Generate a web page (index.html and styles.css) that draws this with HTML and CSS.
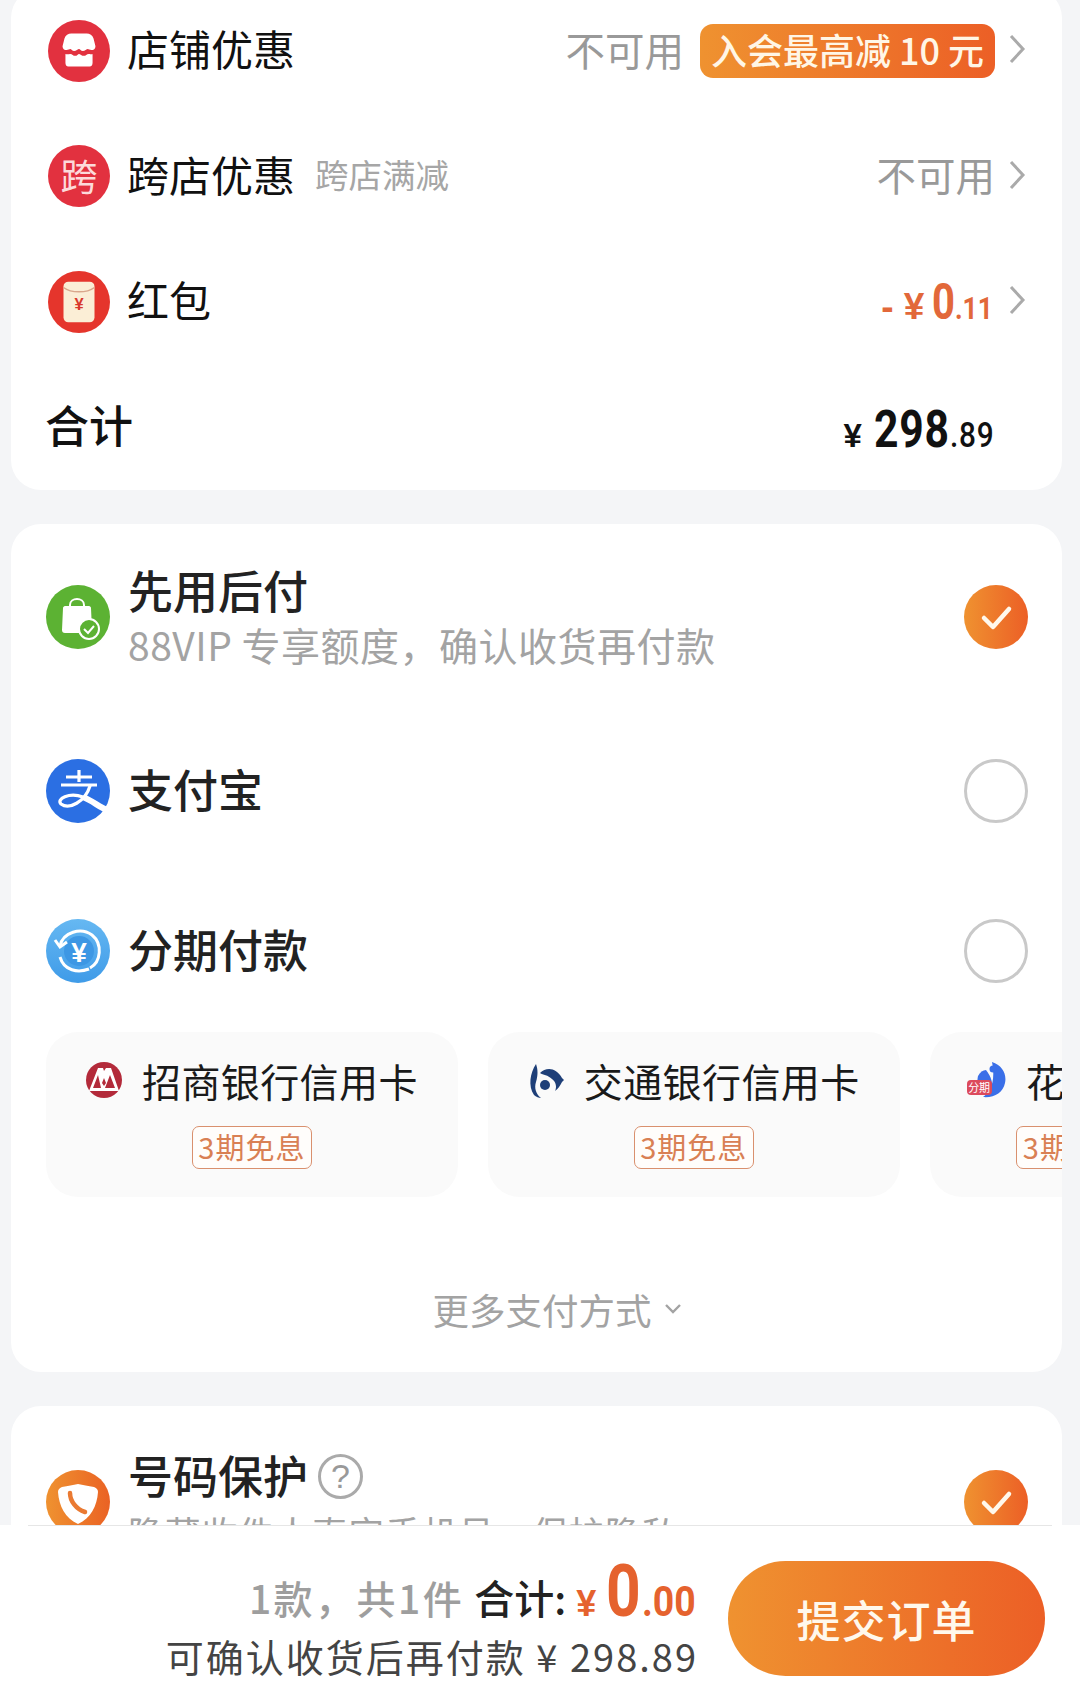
FILE: index.html
```html
<!DOCTYPE html>
<html lang="zh-CN">
<head>
    <meta charset="UTF-8" />
    <title>确认订单</title>
    <link rel="stylesheet" href="styles.css">
</head>
<body>
    <div class="page">
        <section class="card card-top">
            <div class="row">
                <svg class="icon" viewBox="0 0 64 64"><circle cx="32" cy="32" r="32" fill="#e2313f"/><path fill="#fff" d="M24 14h16c3 0 6 2 7 5l2 8c0 3-2 4-4 4s-3-1-4-1-3 2-5 2-3-2-4-2-3 2-5 2-3-2-4-2-2 1-4 1-4-1-4-4l2-8c1-3 4-5 7-5z"/><path fill="#fff" d="M18 35c2 1 3 0 5 0s3 2 5 2 3-2 4-2 3 2 5 2 3-2 5-2 3 1 4 0v9c0 2-1 4-3 4H21c-2 0-3-2-3-4z"/></svg>
                <span class="row-name">店铺优惠</span>
                <span class="row-value">不可用</span>
                <span class="promo">入会最高减 10 元</span>
                <svg class="chevron" viewBox="0 0 18 32"><path d="M3 3l12 13L3 29"/></svg>
            </div>
            <div class="row">
                <span class="icon icon-text">跨</span>
                <span class="row-name">跨店优惠</span>
                <span class="row-note">跨店满减</span>
                <span class="row-value">不可用</span>
                <svg class="chevron" viewBox="0 0 18 32"><path d="M3 3l12 13L3 29"/></svg>
            </div>
            <div class="row">
                <svg class="icon" viewBox="0 0 64 64"><circle cx="32" cy="32" r="32" fill="#e5352c"/><rect x="16" y="11" width="32" height="42" rx="5" fill="#fbeed6"/><path d="M16 17c8 6 24 6 32 0" fill="none" stroke="#d9a78c" stroke-width="1.5"/><text class="packet-yen" x="32" y="40" text-anchor="middle">¥</text></svg>
                <span class="row-name">红包</span>
                <span class="discount"><span class="cur">- ¥</span><b>0</b><i>.11</i></span>
                <svg class="chevron" viewBox="0 0 18 32"><path d="M3 3l12 13L3 29"/></svg>
            </div>
            <div class="row row-total">
                <span class="total-name">合计</span>
                <span class="total"><span class="cur">¥</span><b>298</b><i>.89</i></span>
            </div>
        </section>

        <section class="card card-pay">
            <div class="pay-row pay-first">
                <svg class="icon-big" viewBox="0 0 64 64"><circle cx="32" cy="32" r="32" fill="#5cb233"/><path fill="#fff" d="M17 23c0-1 1-2 2-2h24c1 0 2 1 2 2l1 22c0 2-1 3-3 3H19c-2 0-3-1-3-3z"/><path d="M24 26v-6c0-8 14-8 14 0v6" fill="none" stroke="#fff" stroke-width="2"/><circle cx="43" cy="44" r="10" fill="#5cb233" stroke="#fff" stroke-width="2"/><path d="M38 44l4 4 6-7" fill="none" stroke="#fff" stroke-width="2"/></svg>
                <div class="pay-text">
                    <div class="pay-title">先用后付</div>
                    <div class="pay-sub">88VIP 专享额度，确认收货再付款</div>
                </div>
                <span class="radio radio-on"><svg viewBox="0 0 64 64"><path d="M20 33l9 9 16-18"/></svg></span>
            </div>
            <div class="pay-row">
                <svg class="icon-big" viewBox="0 0 64 64"><circle cx="32" cy="32" r="32" fill="#2b6fe3"/><g fill="none" stroke="#fff" stroke-width="3.2"><path d="M33 11v12M20 18h26M15 26h36"/><path d="M44 27C39 43 23 51 15 45c-5-5 8-12 22-7" stroke-linecap="round"/><path d="M37 38c10 4 16 10 24 13" stroke-width="6"/></g></svg>
                <div class="pay-title pay-single">支付宝</div>
                <span class="radio"></span>
            </div>
            <div class="pay-row">
                <svg class="icon-big" viewBox="0 0 64 64"><defs><linearGradient id="sky" x1="0" y1="0" x2="0" y2="1"><stop offset="0" stop-color="#66b8f2"/><stop offset="1" stop-color="#3f9be8"/></linearGradient></defs><circle cx="32" cy="32" r="32" fill="url(#sky)"/><circle cx="33" cy="32" r="15" fill="#3d97e4"/><g fill="none" stroke="#fff" stroke-width="3"><path d="M14 27C17 13 35 8 46 16 57 25 55 43 44 49"/><path d="M14 38c4 14 18 16 29 12"/><path d="M9 21l5 7 7-5"/></g><text class="yen-mark" x="33" y="43" text-anchor="middle">¥</text></svg>
                <div class="pay-title pay-single">分期付款</div>
                <span class="radio"></span>
            </div>
            <div class="banks">
                <div class="bank">
                    <div class="bank-head">
                        <svg class="bank-logo" viewBox="0 0 36 36"><circle cx="18" cy="18" r="18" fill="#b32a3a"/><path fill="#fff" d="M3 29L12 6h5l1 3 2-3h5l8 23z"/><path fill="#b32a3a" d="M12 13l-5 13h8zM24 13l-5 13h10zM18 16l-2 5 2 3 2-3z"/></svg>
                        <span class="bank-name">招商银行信用卡</span>
                    </div>
                    <span class="bank-tag">3期免息</span>
                </div>
                <div class="bank">
                    <div class="bank-head">
                        <svg class="bank-logo" viewBox="0 0 36 36"><path fill="#1e3f78" d="M8 2C2 11 0 24 6 33c2 2 5 3 7 3-5-4-7-10-5-16 2-7 2-12 0-18z"/><path fill="#1e3f78" d="M12 11c6-6 16-6 22 5l2 2-2 2c-2 4-4 7-7 9 2-4 1-9-3-12-4-4-9-4-12-6z"/><circle cx="17" cy="23" r="5" fill="#1e3f78"/></svg>
                        <span class="bank-name">交通银行信用卡</span>
                    </div>
                    <span class="bank-tag">3期免息</span>
                </div>
                <div class="bank">
                    <div class="bank-head">
                        <span class="huabei">
                            <svg class="bank-logo" viewBox="0 0 36 36"><path fill="#3a6fe8" d="M22 0c10 3 15 12 13 21-2 10-11 15-22 14C20 30 26 20 22 0z"/><path fill="#3a6fe8" d="M8 14c2-4 5-6 8-6 5 7 8 13 4 20-3 3-7 2-10 0-3-4-3-9-2-14z"/><circle cx="23" cy="7" r="3.5" fill="#3a6fe8"/></svg>
                            <span class="huabei-tag">分期</span>
                        </span>
                        <span class="bank-name">花呗分期</span>
                    </div>
                    <span class="bank-tag">3期免息</span>
                </div>
            </div>
            <div class="more">
                <span>更多支付方式</span>
                <svg class="more-arrow" viewBox="0 0 18 12"><path d="M2 2l7 7 7-7"/></svg>
            </div>
        </section>

        <section class="card card-phone">
            <div class="pay-row">
                <svg class="icon-big" viewBox="0 0 64 64"><defs><linearGradient id="amber" x1="0" y1="0" x2="1" y2="0"><stop offset="0" stop-color="#ef9230"/><stop offset="1" stop-color="#ea6224"/></linearGradient></defs><circle cx="32" cy="32" r="32" fill="url(#amber)"/><path fill="#fff" d="M32 14c5 1 10 2 16 3 3 1 4 3 4 5-1 14-7 26-20 32C19 48 13 36 12 22c0-2 1-4 4-5 6-1 11-2 16-3z"/><path d="M24 23c0 8 6 16 15 19" fill="none" stroke="#ea7a32" stroke-width="4.5" stroke-linecap="round"/></svg>
                <div class="pay-text">
                    <div class="pay-title">号码保护<span class="help">?</span></div>
                    <div class="pay-sub pay-sub-small">隐藏收件人真实手机号，保护隐私</div>
                </div>
                <span class="radio radio-on"><svg viewBox="0 0 64 64"><path d="M20 33l9 9 16-18"/></svg></span>
            </div>
        </section>
    </div>

    <footer class="bar">
        <div class="bar-rule"></div>
        <div class="bar-body">
            <div class="sum">
                <div class="sum-line">
                    <span class="sum-count">1款，共1件</span>
                    <span class="sum-label">合计:</span>
                    <span class="sum-price"><span class="cur">¥</span><b>0</b><i>.00</i></span>
                </div>
                <div class="sum-later">可确认收货后再付款 ¥ 298.89</div>
            </div>
            <button class="submit">提交订单</button>
        </div>
    </footer>
</body>
</html>
```

FILE: styles.css
```css
* {
    box-sizing: border-box;
}
body {
    margin: 0;
    width: 1080px;
    height: 1700px;
    overflow: hidden;
    position: relative;
    background: #f4f5f7;
    font-family: "Noto Sans CJK SC", "Liberation Sans", sans-serif;
    color: #111;
}
.page {
    padding: 0 18px 0 11px;
}
.card {
    background: #fff;
    border-radius: 30px;
    margin-bottom: 34px;
    overflow: hidden;
}
.card-top {
    margin-top: -12px;
    height: 502px;
}
.card-pay {
    height: 848px;
    padding-top: 13px;
}
.card-phone {
    height: 300px;
}

/* prices: digits are squeezed to look like the app's condensed number font */
.discount b,
.discount i,
.total b,
.total i,
.sum-price b,
.sum-price i {
    transform-origin: 0 100%;
    font-family: "Roboto", sans-serif;
    font-style: normal;
}

/* rows */
.row {
    height: 125.5px;
    display: flex;
    align-items: center;
    padding: 0 36px 0 37px;
}
.icon {
    width: 62px;
    height: 62px;
    flex-shrink: 0;
    margin-right: 17px;
}
.icon-text {
    border-radius: 50%;
    background: #e2313f;
    color: #fcdada;
    font-size: 37px;
    line-height: 60px;
    text-align: center;
}
.packet-yen {
    font: bold 17px "Liberation Sans", sans-serif;
    fill: #d8382c;
}
.row-name {
    font-size: 42px;
    line-height: 50px;
    padding-bottom: 5px;
}
.row-note {
    font-size: 33.5px;
    color: #a6a6a6;
    margin-left: 20px;
    padding-bottom: 5px;
}
.row-value {
    font-size: 39.5px;
    color: #999;
    margin-left: auto;
    padding-bottom: 5px;
}
.promo {
    margin-left: 16px;
    height: 54px;
    width: 295px;
    border-radius: 13px;
    background: linear-gradient(90deg, #ef9230, #ec5f26);
    color: #fff6e6;
    font-size: 36px;
    font-weight: 500;
    line-height: 50px;
    text-align: center;
    white-space: nowrap;
}
.chevron {
    width: 18px;
    height: 32px;
    margin: 0 0 3px 13px;
    flex-shrink: 0;
}
.chevron path {
    fill: none;
    stroke: #aaa;
    stroke-width: 3;
}
.discount {
    margin-left: auto;
    color: #e2683a;
    display: flex;
    align-items: baseline;
}
.discount .cur {
    font: bold 37px "Liberation Sans", sans-serif;
    margin-right: 8px;
}
.discount b {
    font-size: 50px;
    font-weight: bold;
    transform: scaleX(0.8);
    margin-right: -6px;
}
.discount i {
    font-size: 32px;
    font-weight: bold;
    transform: scaleX(0.82);
    margin-right: -6px;
}
.row-total {
    padding-right: 66px;
}
.total-name {
    font-size: 44px;
    font-weight: 500;
    margin-left: -3px;
    padding-bottom: 6px;
}
.total {
    margin-left: auto;
    display: flex;
    align-items: baseline;
    padding-top: 4px;
}
.total .cur {
    font: bold 33px "Liberation Sans", sans-serif;
    margin-right: 12px;
}
.total b {
    font-size: 52px;
    font-weight: bold;
    letter-spacing: 1px;
    transform: scaleX(0.82);
    margin-right: -16px;
}
.total i {
    font-size: 35px;
    font-weight: 500;
    letter-spacing: 1px;
    transform: scaleX(0.85);
    margin-right: -7px;
}

/* payment */
.pay-row {
    height: 160px;
    display: flex;
    align-items: center;
    padding: 0 34px 0 35px;
}
.pay-first {
    margin-bottom: 14px;
}
.card-phone .pay-row {
    height: 192px;
}
.icon-big {
    width: 64px;
    height: 64px;
    flex-shrink: 0;
    margin-right: 18px;
}
.yen-mark {
    font: bold 28px "Liberation Sans", sans-serif;
    fill: #fff;
}
.pay-text {
    min-width: 0;
}
.pay-title {
    font-size: 45px;
    font-weight: 500;
    line-height: 55px;
    color: #222;
    display: flex;
    align-items: center;
}
.pay-single {
    padding-bottom: 5px;
}
.pay-sub {
    font-size: 39px;
    line-height: 55px;
    letter-spacing: 0.5px;
    color: #a3a3a3;
    white-space: nowrap;
}
.pay-sub-small {
    font-size: 36px;
    letter-spacing: 0.7px;
    margin: 3px 0 -3px;
}
.help {
    width: 45px;
    height: 45px;
    margin: 4px 0 0 10px;
    border: 3px solid #aaa;
    border-radius: 50%;
    color: #999;
    font: 34px/39px "Liberation Sans", sans-serif;
    text-align: center;
}
.radio {
    width: 64px;
    height: 64px;
    margin-left: auto;
    flex-shrink: 0;
    border-radius: 50%;
    border: 3px solid #c9c9c9;
}
.radio-on {
    border: 0;
    background: linear-gradient(90deg, #ef9230, #ec5f26);
}
.radio-on svg {
    display: block;
}
.radio-on path {
    fill: none;
    stroke: #fff8ec;
    stroke-width: 4.5;
    stroke-linecap: round;
    stroke-linejoin: round;
}

/* bank cards */
.banks {
    display: flex;
    gap: 30px;
    padding-left: 35px;
    margin-top: 1px;
}
.bank {
    flex-shrink: 0;
    height: 165px;
    padding: 28px 40px 0;
    border-radius: 32px;
    background: #fafafa;
    display: flex;
    flex-direction: column;
    align-items: center;
}
.bank-head {
    display: flex;
    align-items: center;
    gap: 20px;
}
.bank-logo {
    width: 36px;
    height: 36px;
    display: block;
}
.bank-name {
    font-size: 39px;
    line-height: 40px;
    letter-spacing: 0.4px;
    color: #1a1a1a;
    white-space: nowrap;
}
.bank-tag {
    margin-top: 26px;
    width: 120px;
    height: 43px;
    flex-shrink: 0;
    border: 1.5px solid #d9906e;
    border-radius: 7px;
    background: #fffdfb;
    color: #d98054;
    font-size: 29px;
    line-height: 38px;
    letter-spacing: 1px;
    text-align: center;
    white-space: nowrap;
}
.huabei {
    position: relative;
    display: block;
}
.huabei-tag {
    position: absolute;
    left: -3px;
    top: 18px;
    width: 25px;
    height: 15px;
    border-radius: 4px;
    background: #dc4a5c;
    color: #fff;
    font-size: 11px;
    line-height: 15px;
    text-align: center;
}
.more {
    margin-top: 82px;
    height: 60px;
    padding-left: 41px;
    display: flex;
    align-items: center;
    justify-content: center;
    gap: 12px;
    font-size: 36.5px;
    color: #a3a3a3;
}
.more-arrow {
    width: 18px;
    height: 12px;
}
.more-arrow path {
    fill: none;
    stroke: #a3a3a3;
    stroke-width: 2.4;
}

/* bottom bar */
.bar {
    position: absolute;
    left: 0;
    right: 0;
    bottom: 0;
    height: 175px;
    background: #fff;
}
.bar-rule {
    height: 1px;
    margin: 0 28px;
    background: #e6e6e6;
}
.bar-body {
    display: flex;
    justify-content: flex-end;
    padding: 35px 35px 0 0;
    gap: 32px;
}
.sum {
    margin-top: -9px;
    display: flex;
    flex-direction: column;
    align-items: flex-end;
}
.sum-line {
    height: 75px;
    padding-top: 15px;
    display: flex;
    align-items: center;
}
.sum-count {
    font-size: 39px;
    font-weight: 500;
    letter-spacing: 2.5px;
    color: #9e9e9e;
}
.sum-label {
    font-size: 40px;
    font-weight: 500;
    margin-left: 10px;
    color: #222;
}
.sum-price {
    margin-left: 10px;
    padding-bottom: 11px;
    color: #e5622e;
    display: flex;
    align-items: baseline;
}
.sum-price .cur {
    font: bold 36px "Liberation Sans", sans-serif;
    margin-right: 10px;
}
.sum-price b {
    font-size: 72px;
    font-weight: bold;
    transform: scaleX(0.84);
    margin-right: -6px;
}
.sum-price i {
    font-size: 42px;
    font-weight: bold;
    transform: scaleX(0.89);
    margin-right: -6px;
}
.sum-later {
    font-size: 38px;
    line-height: 57px;
    letter-spacing: 2px;
    margin-right: -2px;
    color: #444;
    white-space: nowrap;
}
.submit {
    width: 317px;
    height: 115px;
    border: 0;
    border-radius: 58px;
    background: linear-gradient(90deg, #ef9230, #ec5f26);
    color: #fff8ec;
    font-family: inherit;
    font-size: 44px;
    font-weight: 500;
    letter-spacing: 1px;
}
```
